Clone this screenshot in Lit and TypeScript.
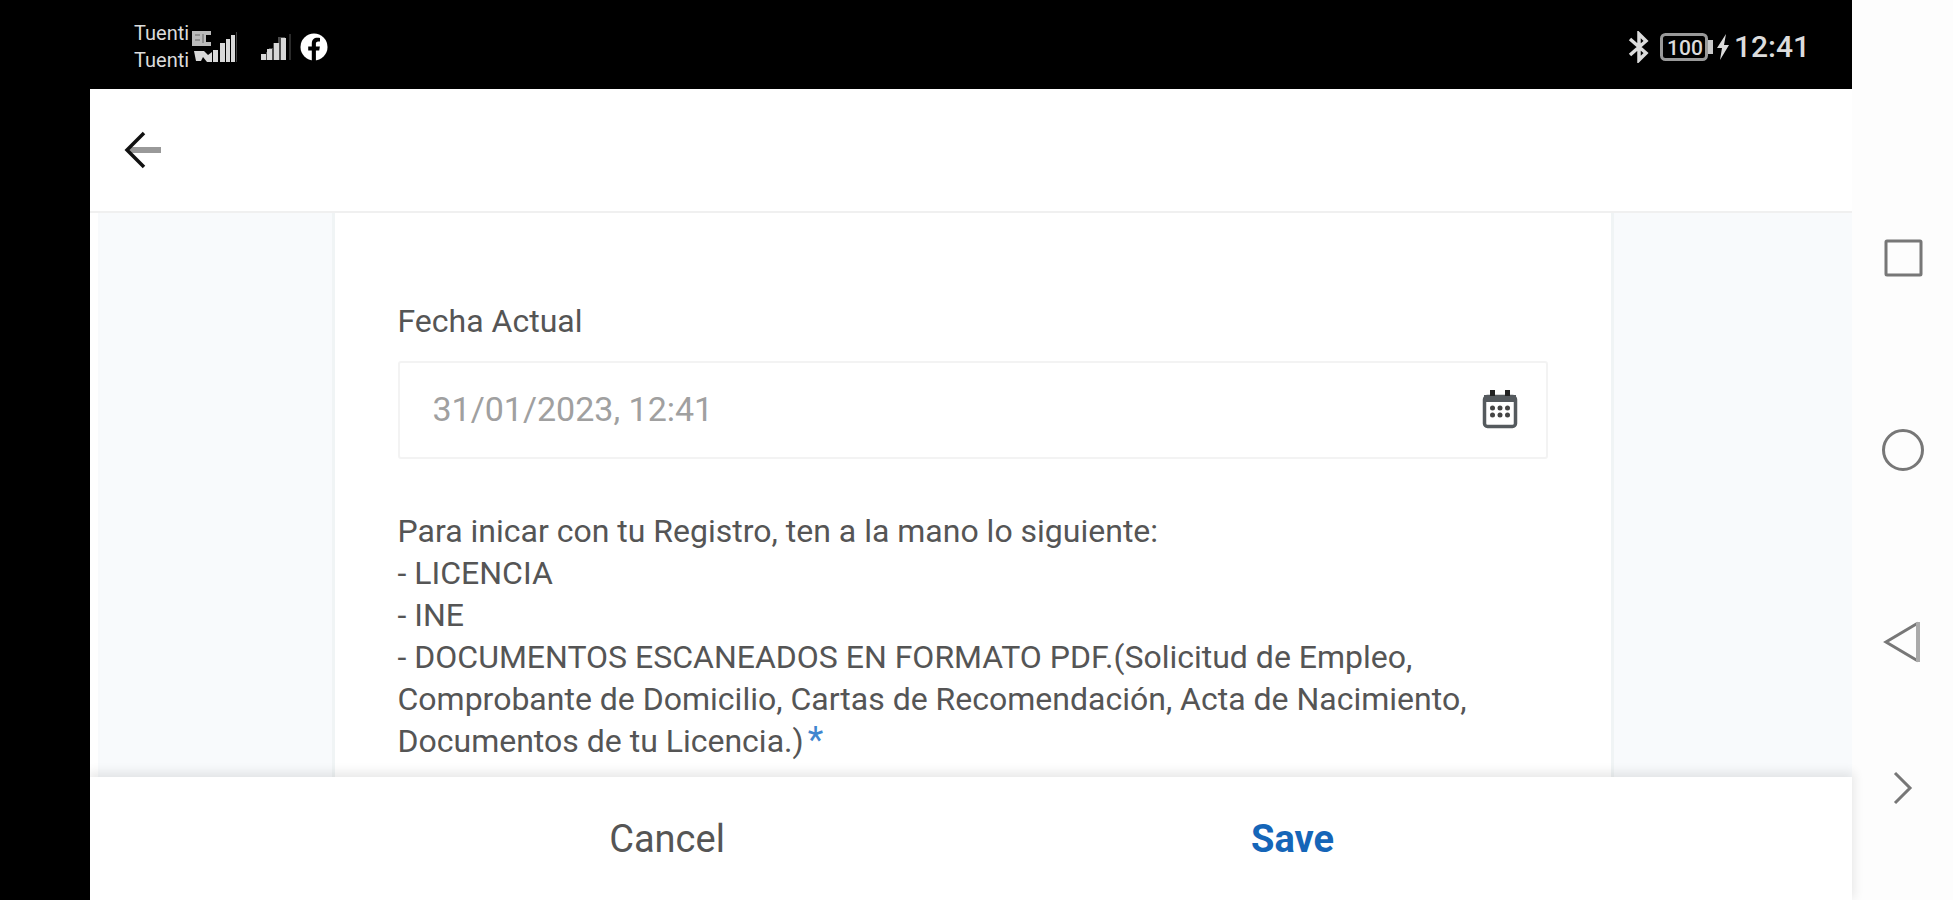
import { LitElement, html, css, svg } from "lit";
import { customElement, state } from "lit/decorators.js";

const bars = svg`
  <path d="M0 20h5v-2h3v-4h4v-5h5V3h7v23H0z" opacity=".35"/>
  <rect x="0" y="20" width="5" height="6"/><rect x="6" y="15" width="5" height="11"/>
  <rect x="13" y="9" width="5" height="17"/><rect x="20" y="4" width="5" height="22"/>
  <rect x="28" y="0" width="2" height="26" opacity=".2"/>`;

@customElement("status-bar")
export class StatusBar extends LitElement {
  static styles = css`
    :host {
      display: flex;
      align-items: center;
      justify-content: space-between;
      height: 89px;
      padding: 0 42px 0 44px;
      box-sizing: border-box;
      background: #000;
      color: #dcdcdc;
    }
    .group { display: flex; align-items: center; padding-top: 4px; }
    .carriers { font-size: 20px; line-height: 27px; width: 58px; }
    .signal { margin-right: 22px; }
    .second { margin-right: 6px; }
    .bluetooth { margin-right: 11px; }
    .bolt { margin: 0 5px 0 4px; }
    .time { font-size: 30px; font-weight: 500; line-height: 40px; }
    .level { font: 500 21px Roboto, sans-serif; }
    svg { display: block; }
  `;
  render() {
    return html`
      <div class="group">
        <div class="carriers"><div>Tuenti</div><div>Tuenti</div></div>
        <svg class="signal" width="46" height="32" fill="#d8d8d8" aria-label="Signal">
          <path d="M0 0h19v4h-5v7h5v4H0z" fill="#bbb"/>
          <path d="M3 4h5M3 9h5M11 3v9" stroke="#666" stroke-width="1" fill="none"/>
          <path d="M2 20h10l4 4 4-3v10h-5l-4-5-2 4H4z"/>
          <path d="M21 19h5v12h-5zM28 12h5v19h-5zM34 8h4v23h-4zM39 4h4v27h-4z"/>
          <path d="M44 1h1v30h-1z" opacity=".3"/>
        </svg>
        <svg class="second" width="34" height="30" viewBox="-1 -2 34 30" fill="#d8d8d8" aria-label="Signal">${bars}</svg>
        <svg width="28" height="28" viewBox="0 0 28 28" aria-label="Facebook">
          <circle cx="14" cy="14" r="13.5" fill="#fff"/>
          <path d="M11.8 28V17.6H8.2v-4h3.6v-3c0-3.8 2.2-5.8 5.6-5.8 1.3 0 2.6.2 2.6.2v3.4h-1.8c-1.7 0-2.3 1-2.3 2.1v3.1h4l-.7 4h-3.3V28z" fill="#000"/>
        </svg>
      </div>
      <div class="group">
        <svg class="bluetooth" width="21" height="32" viewBox="0 0 21 32" fill="none" stroke="#dcdcdc" stroke-width="3.5" aria-label="Bluetooth">
          <path d="M2 8l16 14-7 7V3l7 7L2 24"/>
        </svg>
        <svg width="53" height="28" viewBox="0 0 53 28" aria-label="Battery">
          <rect x="1.5" y="1.5" width="45" height="25" rx="4" fill="none" stroke="#999" stroke-width="3"/>
          <rect x="48" y="7" width="5" height="14" fill="#c8c8c8"/>
          <text class="level" x="25" y="22" text-anchor="middle" fill="#dcdcdc">100</text>
        </svg>
        <svg class="bolt" width="12" height="26" viewBox="0 0 12 26" aria-label="Charging">
          <path d="M9 0L0 14h5L3 26l9-15H7z" fill="#dcdcdc"/>
        </svg>
        <div class="time">12:41</div>
      </div>`;
  }
}

@customElement("system-nav")
export class SystemNav extends LitElement {
  static styles = css`
    :host { display: block; background: #fdfdfd; }
    nav {
      height: 100%;
      box-sizing: border-box;
      display: flex;
      flex-direction: column;
      align-items: center;
      padding: 226px 0 0;
      gap: 128px;
    }
    button { border: 0; padding: 0; background: none; width: 64px; height: 64px; display: grid; place-items: center; }
    .last { margin-top: -47px; }
    svg { fill: none; stroke: #777; stroke-width: 3; display: block; }
  `;
  render() {
    return html`<nav aria-label="System">
      <button aria-label="Recent apps"><svg width="44" height="44"><rect x="5" y="5" width="35" height="34" rx="1"/></svg></button>
      <button aria-label="Home"><svg width="44" height="44"><circle cx="22" cy="22" r="19.5"/></svg></button>
      <button aria-label="Back"><svg width="44" height="44"><path d="M37 3L5 22l32 19"/><path d="M37 2v40" stroke="#aaa" stroke-width="4"/></svg></button>
      <button class="last" aria-label="Hide bar"><svg width="44" height="44"><path d="M14 8l15 15-15 15"/></svg></button>
    </nav>`;
  }
}

@customElement("app-root")
export class AppRoot extends LitElement {
  static styles = css`
    :host {
      display: grid;
      grid-template-columns: minmax(0, 1fr) 101px;
      height: 100vh;
      overflow: hidden;
      background: #fff;
      font-family: Roboto, sans-serif;
      color: #555;
    }
    .device { display: flex; flex-direction: column; min-height: 0; padding-left: 90px; background: #000; }
    status-bar { flex: none; }
    .app { flex: 1; min-height: 0; display: flex; flex-direction: column; background: #fff; }
    header { flex: none; height: 124px; box-sizing: border-box; border-bottom: 2px solid #f0f0f0; padding: 0 24px; display: flex; align-items: center; }
    button { font: inherit; color: inherit; border: 0; background: none; padding: 0; cursor: pointer; }
    svg { display: block; }
    main { flex: 1; min-height: 0; overflow: hidden; margin-left: 8px; padding-right: 5px; background: #f8fafc; display: flex; justify-content: center; }
    .card {
      width: 100%;
      max-width: 1282px;
      box-sizing: border-box;
      border: solid #f0f4f5;
      border-width: 0 3px;
      background: #fff;
      padding: 87px 63px 0;
      font-size: 32px;
      line-height: 42px;
    }
    label { display: block; margin-bottom: 19px; }
    .field { display: flex; align-items: center; height: 98px; box-sizing: border-box; border: 2px solid #f3f3f3; border-radius: 3px; padding: 0 28px 2px 33px; margin-bottom: 51px; }
    input { flex: 1; min-width: 0; font: inherit; font-size: 34px; color: #a0a0a0; border: 0; padding: 0; background: none; outline: none; }
    p { margin: 0; }
    .required { color: #3f86cf; font-size: 36px; line-height: 32px; margin-left: 4px; }
    footer {
      flex: none;
      position: relative;
      height: 123px;
      box-sizing: border-box;
      padding: 0 14% 0 15%;
      background: #fff;
      box-shadow: 0 -3px 10px 2px rgba(0, 0, 0, 0.09);
      display: grid;
      grid-template-columns: 1fr 1fr;
      place-items: center;
      font-size: 38px;
      line-height: 48px;
    }
    .save { color: #1565b8; font-weight: 700; }
  `;

  @state() private date = "31/01/2023, 12:41";

  render() {
    return html`
      <div class="device">
        <status-bar></status-bar>
        <div class="app">
          <header>
            <button aria-label="Back">
              <svg width="60" height="48" viewBox="0 0 60 48" fill="none">
                <path d="M15 24H47" stroke="#999" stroke-width="6"/>
                <path d="M30 7L13 24l17 17" stroke="#111" stroke-width="3.5"/>
              </svg>
            </button>
          </header>
          <main>
            <form class="card">
              <label for="date">Fecha Actual</label>
              <div class="field">
                <input id="date" type="text" .value=${this.date} />
                <button type="button" aria-label="Pick date">
                  <svg width="36" height="42" viewBox="0 0 36 42">
                    <rect x="2.5" y="8.5" width="31" height="30" rx="3" fill="#fff" stroke="#555a5e" stroke-width="3.5"/>
                    <path d="M2 7h32v7H2z" fill="#555a5e"/>
                    <path d="M8 2h5v6H8zM23 2h5v6h-5z" fill="#222"/>
                    <g fill="#444">
                      <circle cx="10.5" cy="20" r="2.5"/><circle cx="18" cy="20" r="2.5"/><circle cx="25.5" cy="20" r="2.5"/>
                      <circle cx="10.5" cy="27" r="2.5"/><circle cx="18" cy="27" r="2.5"/><circle cx="25.5" cy="27" r="2.5"/>
                    </g>
                  </svg>
                </button>
              </div>
              <p>Para inicar con tu Registro, ten a la mano lo siguiente:</p>
              <p>- LICENCIA</p>
              <p>- INE</p>
              <p>- DOCUMENTOS ESCANEADOS EN FORMATO PDF.(Solicitud de Empleo, Comprobante de Domicilio, Cartas de Recomendación, Acta de Nacimiento, Documentos de tu Licencia.)<span class="required">*</span></p>
            </form>
          </main>
          <footer>
            <button type="button">Cancel</button>
            <button class="save" type="button">Save</button>
          </footer>
        </div>
      </div>
      <system-nav></system-nav>`;
  }
}
